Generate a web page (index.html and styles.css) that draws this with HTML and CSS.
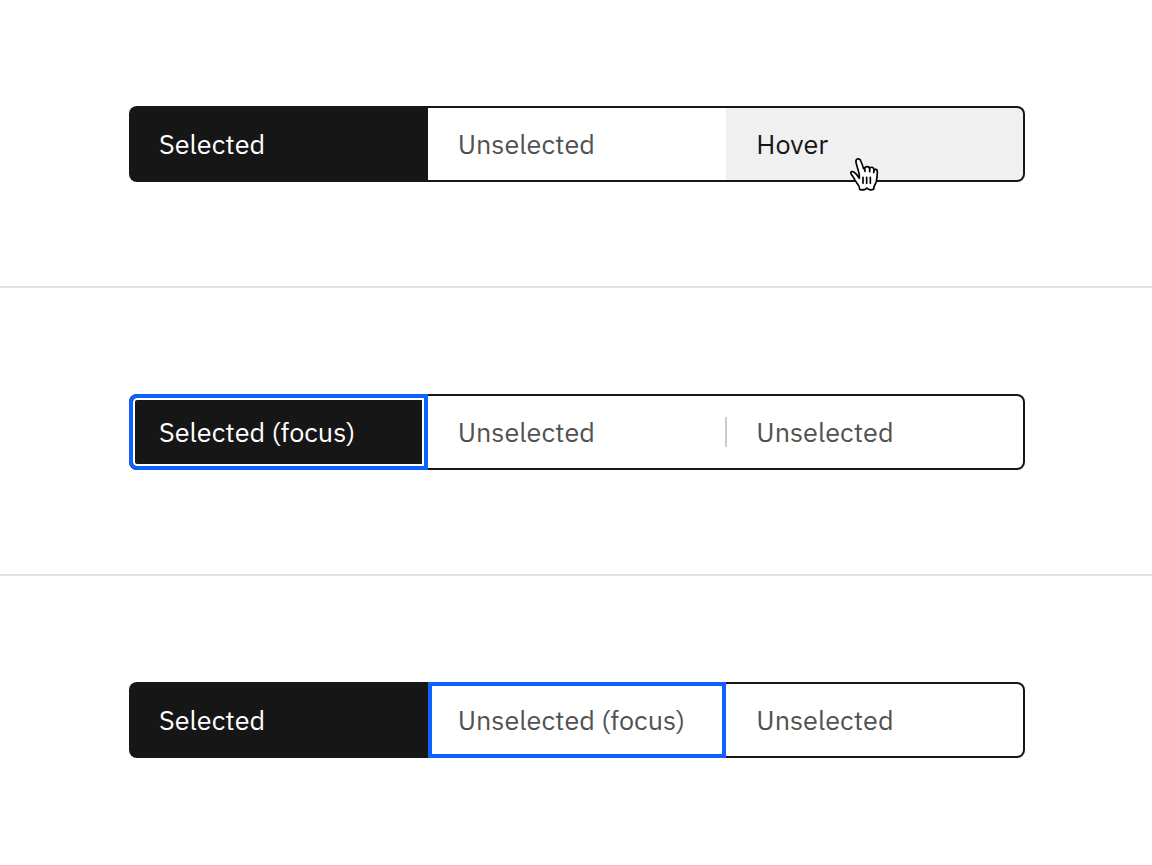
FILE: index.html
```
<!DOCTYPE html>
<html lang="en">
<head>
    <meta charset="UTF-8">
    <meta name="viewport" content="width=device-width, initial-scale=1.0">
    <title>Content switcher states</title>
    <link rel="stylesheet" href="styles.css">
</head>
<body>
    <section class="example">
        <div class="switcher" role="tablist" aria-label="Selected and hover">
            <button class="tab selected" role="tab" aria-selected="true">Selected</button>
            <button class="tab" role="tab" aria-selected="false">Unselected</button>
            <button class="tab hover" role="tab" aria-selected="false">Hover</button>
            <svg class="cursor" viewBox="24 21 96 105" aria-hidden="true">
                <path class="hand" d="M58 85 C53 77 49 71 44 68 C40 65 35 63 33 66 C30 70 35 75 39 80 C43 87 47 95 52 101 C56 106 59 109 59 118 Q64 121 76 118 Q80 111 85 118 Q92 121 101 118 C100 108 107 103 109 94 C111 84 112 77 112 65 C112 57 105 56 102 61 C102 50 91 49 89 57 C88 48 76 48 74 55 L71 56 C68 47 64 36 61 30 C57 24 46 26 48 37 C50 48 55 58 58 74 Z"/>
                <path class="knuckles" d="M74 55 L75 64 M89 57 L89 65 M102 61 L101 68 M69 82 V100 M80 82 V100 M91 82 V100"/>
            </svg>
        </div>
    </section>

    <section class="example">
        <div class="switcher" role="tablist" aria-label="Selected with focus">
            <button class="tab selected focus" role="tab" aria-selected="true">Selected (focus)</button>
            <button class="tab" role="tab" aria-selected="false">Unselected</button>
            <button class="tab divider" role="tab" aria-selected="false">Unselected</button>
        </div>
    </section>

    <section class="example">
        <div class="switcher" role="tablist" aria-label="Unselected with focus">
            <button class="tab selected" role="tab" aria-selected="true">Selected</button>
            <button class="tab focus" role="tab" aria-selected="false">Unselected (focus)</button>
            <button class="tab" role="tab" aria-selected="false">Unselected</button>
        </div>
    </section>
</body>
</html>
```
FILE: styles.css
```
:root {
    --ink: #161616;
    --text: #525252;
    --focus: #0f62fe;
    --hover: #f0f0f0;
    --line: #e0e0e0;
    --divider: #cccccc;
}

* {
    margin: 0;
    padding: 0;
    box-sizing: border-box;
}

body {
    background: white;
    font-family: "IBM Plex Sans", "Noto Sans", sans-serif;
}

.example {
    padding: 106px 127px 104px 129px;
    border-bottom: 2px solid var(--line);
}

.example:last-child {
    border-bottom: none;
}

.switcher {
    position: relative;
    display: grid;
    grid-template-columns: repeat(3, 1fr);
}

.tab {
    position: relative;
    height: 76px;
    padding: 0 30px;
    border: solid var(--ink);
    border-width: 2px 0;
    background: white;
    color: var(--text);
    font-family: inherit;
    font-size: 27px;
    line-height: 36px;
    text-align: left;
    white-space: nowrap;
    cursor: pointer;
}

.tab:first-child {
    padding-left: 28px;
    border-left-width: 2px;
    border-radius: 8px 0 0 8px;
}

.tab:nth-child(3) {
    border-right-width: 2px;
    border-radius: 0 8px 8px 0;
}

.selected {
    background: var(--ink);
    color: white;
}

.hover {
    background: var(--hover);
    color: var(--ink);
}

/* Focus ring sits on top of the outer border */
.focus::after {
    content: "";
    position: absolute;
    inset: -2px 0;
    border: 4px solid var(--focus);
}

.selected.focus::after {
    left: -2px;
    border-radius: 8px 0 0 8px;
    box-shadow: inset 0 0 0 2px white;
}

.divider::before {
    content: "";
    position: absolute;
    top: 21px;
    left: -1px;
    width: 2px;
    height: 30px;
    background: var(--divider);
}

.cursor {
    position: absolute;
    top: 51px;
    right: 145px;
    width: 32px;
    height: 35px;
    pointer-events: none;
}

.hand {
    fill: white;
    stroke: black;
    stroke-width: 5;
    stroke-linejoin: round;
}

.knuckles {
    fill: none;
    stroke: black;
    stroke-width: 5;
    stroke-linecap: round;
}
```
